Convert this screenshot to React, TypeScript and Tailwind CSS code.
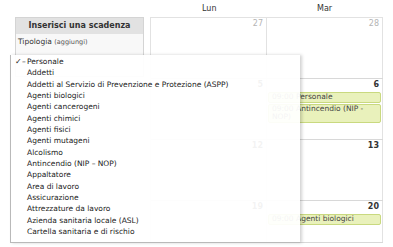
const MENU_ITEMS = [
  "Addetti",
  "Addetti al Servizio di Prevenzione e Protezione (ASPP)",
  "Agenti biologici",
  "Agenti cancerogeni",
  "Agenti chimici",
  "Agenti fisici",
  "Agenti mutageni",
  "Alcolismo",
  "Antincendio (NIP – NOP)",
  "Appaltatore",
  "Area di lavoro",
  "Assicurazione",
  "Attrezzature da lavoro",
  "Azienda sanitaria locale (ASL)",
  "Cartella sanitaria e di rischio",
];

type Ev = { title: string };

const WEEKS: { lun: string; mar: string; muted?: boolean; h: string; events: Ev[] }[] = [
  { lun: "27", mar: "28", muted: true, h: "h-[61px]", events: [] },
  {
    lun: "5",
    mar: "6",
    h: "h-[61px]",
    events: [{ title: "09:00 Personale" }, { title: "09:00 Antincendio (NIP - NOP)" }],
  },
  { lun: "12", mar: "13", h: "h-[61px]", events: [] },
  { lun: "19", mar: "20", h: "h-[42px]", events: [{ title: "09:00 Agenti biologici" }] },
];

function DayNum({ n, muted }: { n: string; muted?: boolean }) {
  return (
    <div
      className={
        muted
          ? "pr-[3px] pt-[1px] text-right text-[8px] leading-[10px] text-[#b5b5b5]"
          : "pr-[3px] pt-[1px] text-right text-[8px] font-bold leading-[10px] text-[#333]"
      }
    >
      {n}
    </div>
  );
}

export default function App() {
  return (
    <div
      className="relative h-[247px] w-[393px] overflow-hidden bg-white text-[#1a1a1a]"
      style={{ fontFamily: '"DejaVu Sans", "Liberation Sans", sans-serif' }}
    >
      <div className="flex items-start">
        {/* left panel */}
        <div className="ml-[15px] mt-[17px] h-[60px] w-[129px] border border-[#d4d4d4] bg-[#f8f8f8]">
          <div className="flex h-[16px] items-center justify-center bg-[#e2e2e2] text-[8px] font-bold text-[#333]">
            Inserisci una scadenza
          </div>
          <div className="px-[2px] pt-[3px] text-[7.5px] leading-[10px] text-[#333]">
            Tipologia <span className="text-[6.5px] text-[#555]">(aggiungi)</span>
          </div>
        </div>

        {/* calendar */}
        <div className="ml-[6px] w-[233px]">
          <div className="flex h-[17px] items-start pt-[4px] text-[8px] leading-[10px] text-[#333]">
            <div className="w-[116px] pl-[52px]">Lun</div>
            <div className="w-[117px] pl-[51px]">Mar</div>
          </div>
          <div className="border-l border-t border-[#e2e2e2]">
            {WEEKS.map((w) => (
              <div key={w.lun} className={`flex border-b border-[#d8d8d8] ${w.h}`}>
                <div className="w-[116px] border-r border-[#e2e2e2]">
                  <DayNum n={w.lun} muted={w.muted} />
                </div>
                <div className="w-[116px] border-r border-[#e2e2e2]">
                  <DayNum n={w.mar} muted={w.muted} />
                  <div className="mt-[2px] flex flex-col gap-[1px] px-[1px]">
                    {w.events.map((e) => (
                      <div
                        key={e.title}
                        className="rounded-[2px] border border-[#c9d97f] bg-[#e9f1bb] px-[3px] text-[7.5px] leading-[8.5px] text-[#444]"
                      >
                        {e.title}
                      </div>
                    ))}
                  </div>
                </div>
              </div>
            ))}
          </div>
        </div>
      </div>

      {/* open select menu */}
      <div className="absolute left-[10px] top-[55px] h-[188px] w-[290px] border-b border-l border-[#b9b9b9] bg-white/[0.94] pt-[1px] shadow-[2px_0_3px_rgba(0,0,0,0.18)]">
        <div className="relative h-[11.33px] pl-[16px] text-[7.5px] leading-[11.33px]">
          <span className="absolute left-[4px] top-0 text-[8px] font-bold">✓</span>
          <span className="absolute left-[11px] top-0">–</span>
          Personale
        </div>
        {MENU_ITEMS.map((item) => (
          <div key={item} className="h-[11.33px] pl-[16px] text-[7.5px] leading-[11.33px]">
            {item}
          </div>
        ))}
      </div>
    </div>
  );
}
